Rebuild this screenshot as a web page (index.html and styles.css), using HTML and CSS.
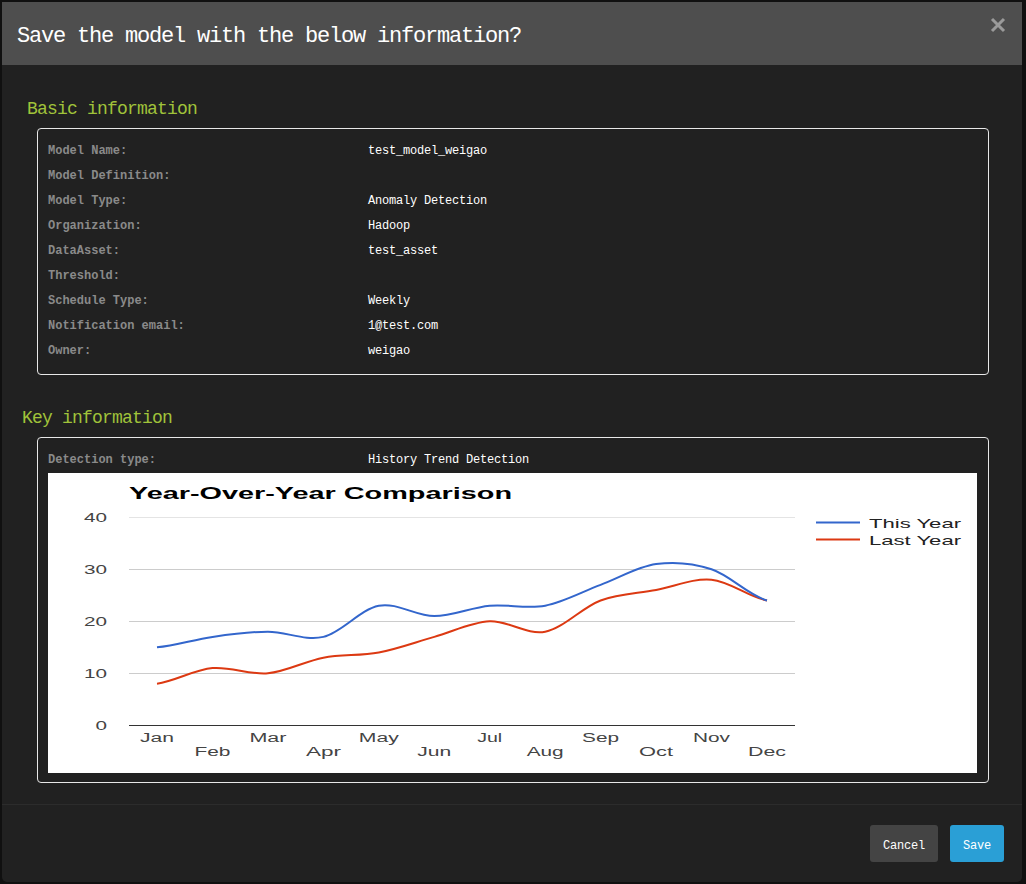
FILE: index.html
```html
<!DOCTYPE html>
<html>
<head>
<meta charset="utf-8">
<title>Save model</title>
<link rel="stylesheet" href="styles.css">
</head>
<body>
<div class="modal">
  <div class="modal-header">
    <h4 class="modal-title">Save the model with the below information?</h4>
    <svg class="close" width="16" height="16" viewBox="0 0 16 16"><path d="M2 2L14 14M14 2L2 14" stroke="#9a9a9a" stroke-width="3" stroke-linecap="butt"/></svg>
  </div>
  <div class="modal-body">
    <h5 class="section section-basic">Basic information</h5>
    <div class="box box-basic">
      <div class="row"><span class="label">Model Name:</span><span class="value">test_model_weigao</span></div>
      <div class="row"><span class="label">Model Definition:</span><span class="value"></span></div>
      <div class="row"><span class="label">Model Type:</span><span class="value">Anomaly Detection</span></div>
      <div class="row"><span class="label">Organization:</span><span class="value">Hadoop</span></div>
      <div class="row"><span class="label">DataAsset:</span><span class="value">test_asset</span></div>
      <div class="row"><span class="label">Threshold:</span><span class="value"></span></div>
      <div class="row"><span class="label">Schedule Type:</span><span class="value">Weekly</span></div>
      <div class="row"><span class="label">Notification email:</span><span class="value">1@test.com</span></div>
      <div class="row"><span class="label">Owner:</span><span class="value">weigao</span></div>
    </div>
    <h5 class="section section-key">Key information</h5>
    <div class="box box-key">
      <div class="row"><span class="label">Detection type:</span><span class="value">History Trend Detection</span></div>
      <div class="chart">
        <svg width="929" height="300" viewBox="0 0 929 300" class="chart-svg">
          <text x="81" y="26" class="c-title" textLength="383" lengthAdjust="spacingAndGlyphs">Year-Over-Year Comparison</text>
          <line x1="81" x2="747" y1="44.5" y2="44.5" stroke="#e4e4e4" stroke-width="1"/>
          <line x1="81" x2="747" y1="96.5" y2="96.5" stroke="#cccccc" stroke-width="1"/>
          <line x1="81" x2="747" y1="148.5" y2="148.5" stroke="#cccccc" stroke-width="1"/>
          <line x1="81" x2="747" y1="200.5" y2="200.5" stroke="#cccccc" stroke-width="1"/>
          <line x1="81" x2="747" y1="252.5" y2="252.5" stroke="#333333" stroke-width="1"/>
          <g class="c-axis" text-anchor="end">
            <text x="59" y="49" textLength="23" lengthAdjust="spacingAndGlyphs">40</text>
            <text x="59" y="101" textLength="23" lengthAdjust="spacingAndGlyphs">30</text>
            <text x="59" y="153" textLength="23" lengthAdjust="spacingAndGlyphs">20</text>
            <text x="59" y="205" textLength="23" lengthAdjust="spacingAndGlyphs">10</text>
            <text x="59" y="257" textLength="11.5" lengthAdjust="spacingAndGlyphs">0</text>
          </g>
          <g class="c-axis" text-anchor="middle">
            <text x="109" y="269" textLength="34" lengthAdjust="spacingAndGlyphs">Jan</text>
            <text x="164.5" y="283" textLength="36" lengthAdjust="spacingAndGlyphs">Feb</text>
            <text x="219.9" y="269" textLength="37" lengthAdjust="spacingAndGlyphs">Mar</text>
            <text x="275.4" y="283" textLength="35" lengthAdjust="spacingAndGlyphs">Apr</text>
            <text x="330.8" y="269" textLength="40" lengthAdjust="spacingAndGlyphs">May</text>
            <text x="386.3" y="283" textLength="34" lengthAdjust="spacingAndGlyphs">Jun</text>
            <text x="441.7" y="269" textLength="25" lengthAdjust="spacingAndGlyphs">Jul</text>
            <text x="497.2" y="283" textLength="37" lengthAdjust="spacingAndGlyphs">Aug</text>
            <text x="552.6" y="269" textLength="37" lengthAdjust="spacingAndGlyphs">Sep</text>
            <text x="608.1" y="283" textLength="34" lengthAdjust="spacingAndGlyphs">Oct</text>
            <text x="663.5" y="269" textLength="37" lengthAdjust="spacingAndGlyphs">Nov</text>
            <text x="719" y="283" textLength="38" lengthAdjust="spacingAndGlyphs">Dec</text>
          </g>
          <path fill="none" stroke="#dc3912" stroke-width="2" d="M109,210.7 C127.5,208.1 146,196.8 164.5,195.1 C182.9,193.4 201.4,202 219.9,200.3 C238.4,198.6 256.9,188.2 275.4,184.7 C293.8,181.2 312.3,183 330.8,179.5 C349.3,176 367.8,169.1 386.3,163.9 C404.7,158.7 423.2,149.2 441.7,148.3 C460.2,147.4 478.7,162.2 497.2,158.7 C515.6,155.2 534.1,134.4 552.6,127.5 C571.1,120.6 589.6,120.6 608.1,117.1 C626.5,113.6 645,105 663.5,106.7 C682,108.4 700.5,124 719,127.5"/>
          <path fill="none" stroke="#3366cc" stroke-width="2" d="M109,174.3 C127.5,172.6 146,166.5 164.5,163.9 C182.9,161.3 201.4,158.7 219.9,158.7 C238.4,158.7 256.9,168.2 275.4,163.9 C293.8,159.6 312.3,136.2 330.8,132.7 C349.3,129.2 367.8,143.1 386.3,143.1 C404.7,143.1 423.2,134.4 441.7,132.7 C460.2,131 478.7,136.2 497.2,132.7 C515.6,129.2 534.1,118.8 552.6,111.9 C571.1,105 589.6,93.7 608.1,91.1 C626.5,88.5 645,90.2 663.5,96.3 C682,102.4 700.5,122.3 719,127.5"/>
          <line x1="768" x2="812" y1="49.5" y2="49.5" stroke="#3366cc" stroke-width="2"/>
          <line x1="768" x2="812" y1="66.5" y2="66.5" stroke="#dc3912" stroke-width="2"/>
          <text x="821" y="55" class="c-legend" textLength="92" lengthAdjust="spacingAndGlyphs">This Year</text>
          <text x="821" y="72" class="c-legend" textLength="92" lengthAdjust="spacingAndGlyphs">Last Year</text>
        </svg>
      </div>
    </div>
  </div>
  <div class="modal-footer">
    <button class="btn btn-cancel">Cancel</button>
    <button class="btn btn-save">Save</button>
  </div>
</div>
</body>
</html>
```

FILE: styles.css
```css
html, body {
  margin: 0;
  padding: 0;
}
body {
  background: #101010;
  padding: 2px;
  font-family: "Liberation Mono", "DejaVu Sans Mono", monospace;
}
.modal {
  width: 1020px;
  background: #212121;
  border-radius: 0 0 5px 5px;
  overflow: hidden;
}
.modal-header {
  height: 63px;
  background: #4e4e4e;
  display: flex;
  align-items: center;
  justify-content: space-between;
  padding: 0 16px 0 15px;
}
.modal-title {
  margin: 0;
  padding-top: 6px;
  font-size: 22px;
  letter-spacing: -1.2px;
  font-weight: normal;
  color: #ffffff;
  line-height: 30px;
}
.close {
  align-self: flex-start;
  margin-top: 15px;
}
.modal-body {
  padding: 30px 33px 21px 35px;
}
.section {
  margin: 0;
  box-sizing: border-box;
  padding-top: 2px;
  font-size: 18px;
  letter-spacing: -0.8px;
  font-weight: normal;
  line-height: 24px;
  height: 24px;
  color: #a0c33a;
}
.section-basic {
  margin: 0 0 9px -10px;
}
.section-key {
  margin: 29px 0 9px -15px;
}
.box {
  border: 1px solid #e8e8e8;
  border-radius: 4px;
}
.box-basic {
  padding: 9px 10px 11px 10px;
}
.box-key {
  padding: 9px 11px 9px 10px;
}
.row {
  display: flex;
  align-items: center;
  height: 25px;
}
.label {
  width: 320px;
  flex: none;
  font-size: 12px;
  font-weight: bold;
  color: #8a8a8a;
}
.value {
  font-size: 12px;
  letter-spacing: -0.2px;
  color: #ffffff;
}
.chart {
  margin-top: 1px;
  width: 929px;
  height: 300px;
  background: #ffffff;
}
.chart-svg {
  display: block;
}
.c-title {
  font-family: "Liberation Sans", Arial, sans-serif;
  font-weight: bold;
  font-size: 16.5px;
  fill: #000000;
}
.c-axis text {
  font-family: "Liberation Sans", Arial, sans-serif;
  font-size: 12.5px;
  fill: #444444;
}
.c-legend {
  font-family: "Liberation Sans", Arial, sans-serif;
  font-size: 13px;
  fill: #222222;
}
.modal-footer {
  border-top: 1px solid #2c2c2c;
  padding: 20px 18px 20px 0;
  display: flex;
  justify-content: flex-end;
  gap: 12px;
}
.btn {
  height: 37px;
  border: 0;
  border-radius: 3px;
  padding: 4px 13px 0;
  font-family: "Liberation Mono", "DejaVu Sans Mono", monospace;
  font-size: 12px;
  letter-spacing: -0.2px;
  color: #ffffff;
}
.btn-cancel {
  background: #444444;
}
.btn-save {
  background: #2a9fd6;
}
```
